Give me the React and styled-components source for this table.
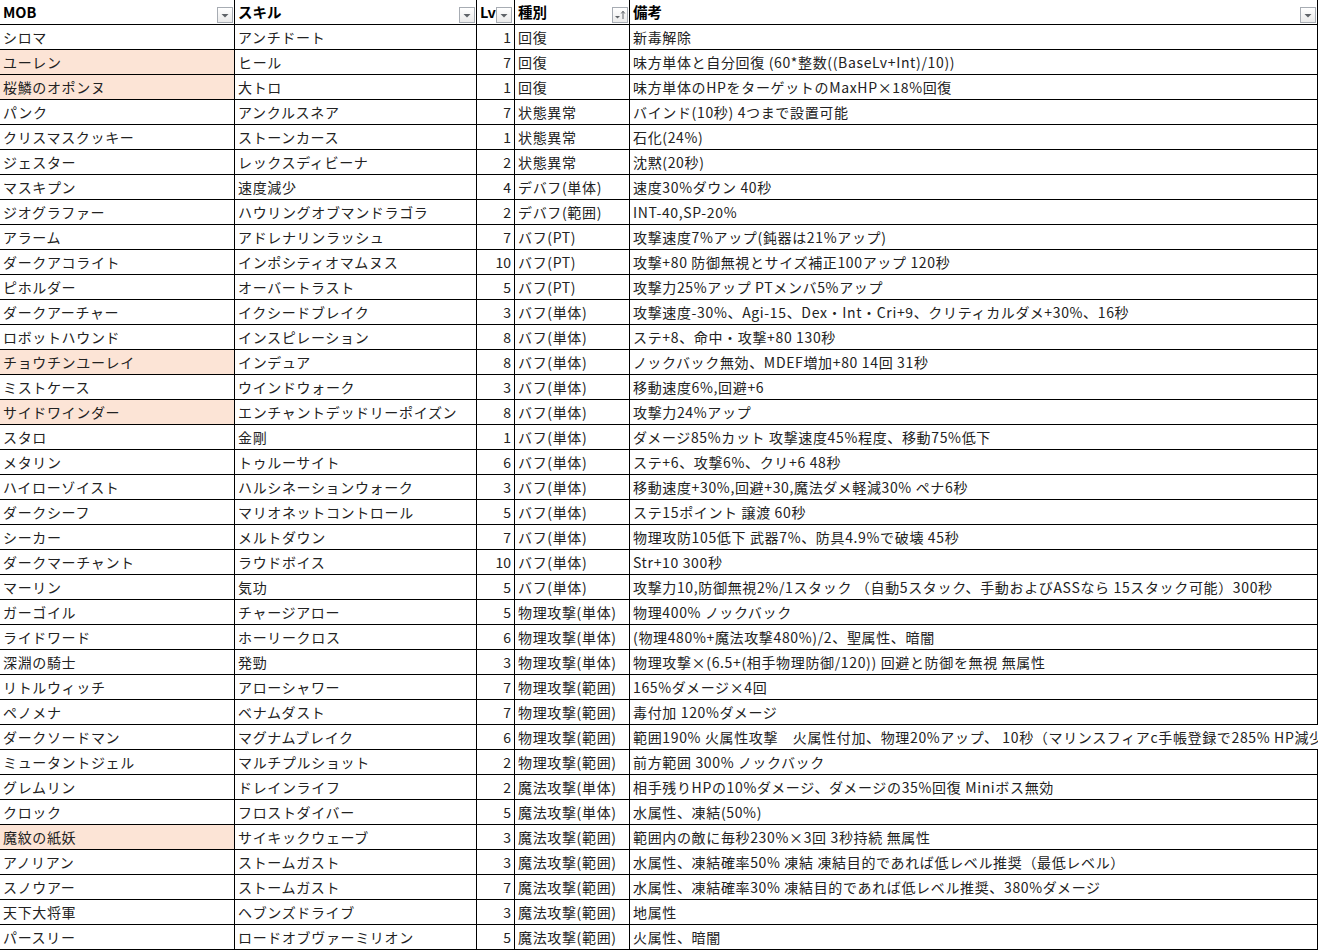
import React from "react";
import styled, { createGlobalStyle } from "styled-components";

const Global = createGlobalStyle`
  html, body { margin: 0; padding: 0; background: #fff; overflow: hidden; }
  body { font-family: "Noto Sans CJK JP", "Noto Sans", sans-serif; }
`;

const Sheet = styled.div`
  width: 1318px;
  overflow: hidden;
  color: #222;
  font-size: 14px;
`;

const Row = styled.div`
  display: grid;
  grid-template-columns: 235px 242px 38px 115px 688px;
  grid-template-rows: 24px;
  height: 25px;
  box-sizing: border-box;
  border-bottom: 1px solid #000;
`;

const Cell = styled.div`
  box-sizing: border-box;
  height: 24px;
  min-width: 0;
  border-right: ${(p) => (p.$open ? "none" : "1px solid #000")};
  background: ${(p) => (p.$hl ? "#fce4d6" : "transparent")};
  padding: 0 ${(p) => (p.$num ? "3px" : "0")} 1px ${(p) => (p.$num ? "0" : "3px")};
  display: flex;
  align-items: center;
  justify-content: ${(p) => (p.$num ? "flex-end" : "flex-start")};
  white-space: nowrap;
  overflow: visible;
  line-height: 18px;
  letter-spacing: ${(p) => (p.$num ? "0" : "0.65px")};
`;

const HeadCell = styled.div`
  box-sizing: border-box;
  height: 24px;
  border-right: 1px solid #000;
  padding: 0 1px 0 3px;
  display: flex;
  align-items: center;
  font-weight: 700;
  font-size: 14.5px;
  line-height: 18px;
  color: #000;
  white-space: nowrap;
`;

const HeadLabel = styled.span`
  flex: ${(p) => (p.$tight ? "0 0 auto" : "1 1 auto")};
  padding-bottom: 1px;
`;

const FilterBtn = styled.span`
  align-self: flex-end;
  margin-bottom: 1px;
  width: 16px;
  height: 16px;
  box-sizing: border-box;
  border: 1px solid #a7acb3;
  background: linear-gradient(#ffffff, #eaeaea);
  display: flex;
  align-items: center;
  justify-content: center;
  flex: 0 0 auto;
`;

const Caret = () => (
  <svg width="8" height="5" viewBox="0 0 8 5">
    <path d="M0.5 1 L7.5 1 L4 4.5 Z" fill="#5f6368" />
  </svg>
);

const SortCaret = () => (
  <svg width="12" height="12" viewBox="0 0 12 12">
    <path d="M1 7 L6 7 L3.5 9.5 Z" fill="#5f6368" />
    <path d="M9 10 L9 2.5" stroke="#5f6368" strokeWidth="1" />
    <path d="M7.2 4.5 L9 2.2 L10.8 4.5" stroke="#5f6368" strokeWidth="1" fill="none" />
  </svg>
);

const rows = [
  ["シロマ", "アンチドート", 1, "回復", "新毒解除"],
  ["ユーレン", "ヒール", 7, "回復", "味方単体と自分回復 (60*整数((BaseLv+Int)/10))", true],
  ["桜鱗のオポンヌ", "大トロ", 1, "回復", "味方単体のHPをターゲットのMaxHP×18%回復", true],
  ["パンク", "アンクルスネア", 7, "状態異常", "バインド(10秒) 4つまで設置可能"],
  ["クリスマスクッキー", "ストーンカース", 1, "状態異常", "石化(24%)"],
  ["ジェスター", "レックスディビーナ", 2, "状態異常", "沈黙(20秒)"],
  ["マスキプン", "速度減少", 4, "デバフ(単体)", "速度30%ダウン 40秒"],
  ["ジオグラファー", "ハウリングオブマンドラゴラ", 2, "デバフ(範囲)", "INT-40,SP-20%"],
  ["アラーム", "アドレナリンラッシュ", 7, "バフ(PT)", "攻撃速度7%アップ(鈍器は21%アップ)"],
  ["ダークアコライト", "インポシティオマムヌス", 10, "バフ(PT)", "攻撃+80 防御無視とサイズ補正100アップ 120秒"],
  ["ピホルダー", "オーバートラスト", 5, "バフ(PT)", "攻撃力25%アップ PTメンバ5%アップ"],
  ["ダークアーチャー", "イクシードブレイク", 3, "バフ(単体)", "攻撃速度-30%、Agi-15、Dex・Int・Cri+9、クリティカルダメ+30%、16秒"],
  ["ロボットハウンド", "インスピレーション", 8, "バフ(単体)", "ステ+8、命中・攻撃+80 130秒"],
  ["チョウチンユーレイ", "インデュア", 8, "バフ(単体)", "ノックバック無効、MDEF増加+80 14回 31秒", true],
  ["ミストケース", "ウインドウォーク", 3, "バフ(単体)", "移動速度6%,回避+6"],
  ["サイドワインダー", "エンチャントデッドリーポイズン", 8, "バフ(単体)", "攻撃力24%アップ", true],
  ["スタロ", "金剛", 1, "バフ(単体)", "ダメージ85%カット 攻撃速度45%程度、移動75%低下"],
  ["メタリン", "トゥルーサイト", 6, "バフ(単体)", "ステ+6、攻撃6%、クリ+6 48秒"],
  ["ハイローゾイスト", "ハルシネーションウォーク", 3, "バフ(単体)", "移動速度+30%,回避+30,魔法ダメ軽減30% ペナ6秒"],
  ["ダークシーフ", "マリオネットコントロール", 5, "バフ(単体)", "ステ15ポイント 譲渡 60秒"],
  ["シーカー", "メルトダウン", 7, "バフ(単体)", "物理攻防105低下 武器7%、防具4.9%で破壊 45秒"],
  ["ダークマーチャント", "ラウドボイス", 10, "バフ(単体)", "Str+10 300秒"],
  ["マーリン", "気功", 5, "バフ(単体)", "攻撃力10,防御無視2%/1スタック （自動5スタック、手動およびASSなら 15スタック可能）300秒"],
  ["ガーゴイル", "チャージアロー", 5, "物理攻撃(単体)", "物理400% ノックバック"],
  ["ライドワード", "ホーリークロス", 6, "物理攻撃(単体)", "(物理480%+魔法攻撃480%)/2、聖属性、暗闇"],
  ["深淵の騎士", "発勁", 3, "物理攻撃(単体)", "物理攻撃×(6.5+(相手物理防御/120)) 回避と防御を無視 無属性"],
  ["リトルウィッチ", "アローシャワー", 7, "物理攻撃(範囲)", "165%ダメージ×4回"],
  ["ペノメナ", "ベナムダスト", 7, "物理攻撃(範囲)", "毒付加 120%ダメージ"],
  ["ダークソードマン", "マグナムブレイク", 6, "物理攻撃(範囲)", "範囲190% 火属性攻撃　火属性付加、物理20%アップ、 10秒（マリンスフィアc手帳登録で285% HP減少", false, true],
  ["ミュータントジェル", "マルチプルショット", 2, "物理攻撃(範囲)", "前方範囲 300% ノックバック"],
  ["グレムリン", "ドレインライフ", 2, "魔法攻撃(単体)", "相手残りHPの10%ダメージ、ダメージの35%回復 Miniボス無効"],
  ["クロック", "フロストダイバー", 5, "魔法攻撃(単体)", "水属性、凍結(50%)"],
  ["魔紋の紙妖", "サイキックウェーブ", 3, "魔法攻撃(範囲)", "範囲内の敵に毎秒230%×3回 3秒持続 無属性", true],
  ["アノリアン", "ストームガスト", 3, "魔法攻撃(範囲)", "水属性、凍結確率50% 凍結 凍結目的であれば低レベル推奨（最低レベル）"],
  ["スノウアー", "ストームガスト", 7, "魔法攻撃(範囲)", "水属性、凍結確率30% 凍結目的であれば低レベル推奨、380%ダメージ"],
  ["天下大将軍", "ヘブンズドライブ", 3, "魔法攻撃(範囲)", "地属性"],
  ["パースリー", "ロードオブヴァーミリオン", 5, "魔法攻撃(範囲)", "火属性、暗闇"],
];

export default function App() {
  return (
    <Sheet>
      <Global />
      <Row>
        <HeadCell>
          <HeadLabel>MOB</HeadLabel>
          <FilterBtn><Caret /></FilterBtn>
        </HeadCell>
        <HeadCell>
          <HeadLabel>スキル</HeadLabel>
          <FilterBtn><Caret /></FilterBtn>
        </HeadCell>
        <HeadCell>
          <HeadLabel $tight>Lv</HeadLabel>
          <FilterBtn><Caret /></FilterBtn>
        </HeadCell>
        <HeadCell>
          <HeadLabel>種別</HeadLabel>
          <FilterBtn><SortCaret /></FilterBtn>
        </HeadCell>
        <HeadCell>
          <HeadLabel>備考</HeadLabel>
          <FilterBtn><Caret /></FilterBtn>
        </HeadCell>
      </Row>
      {rows.map(([mob, skill, lv, kind, note, hl, open]) => (
        <Row key={mob + skill}>
          <Cell $hl={hl}>{mob}</Cell>
          <Cell>{skill}</Cell>
          <Cell $num>{lv}</Cell>
          <Cell>{kind}</Cell>
          <Cell $open={open}>{note}</Cell>
        </Row>
      ))}
    </Sheet>
  );
}
